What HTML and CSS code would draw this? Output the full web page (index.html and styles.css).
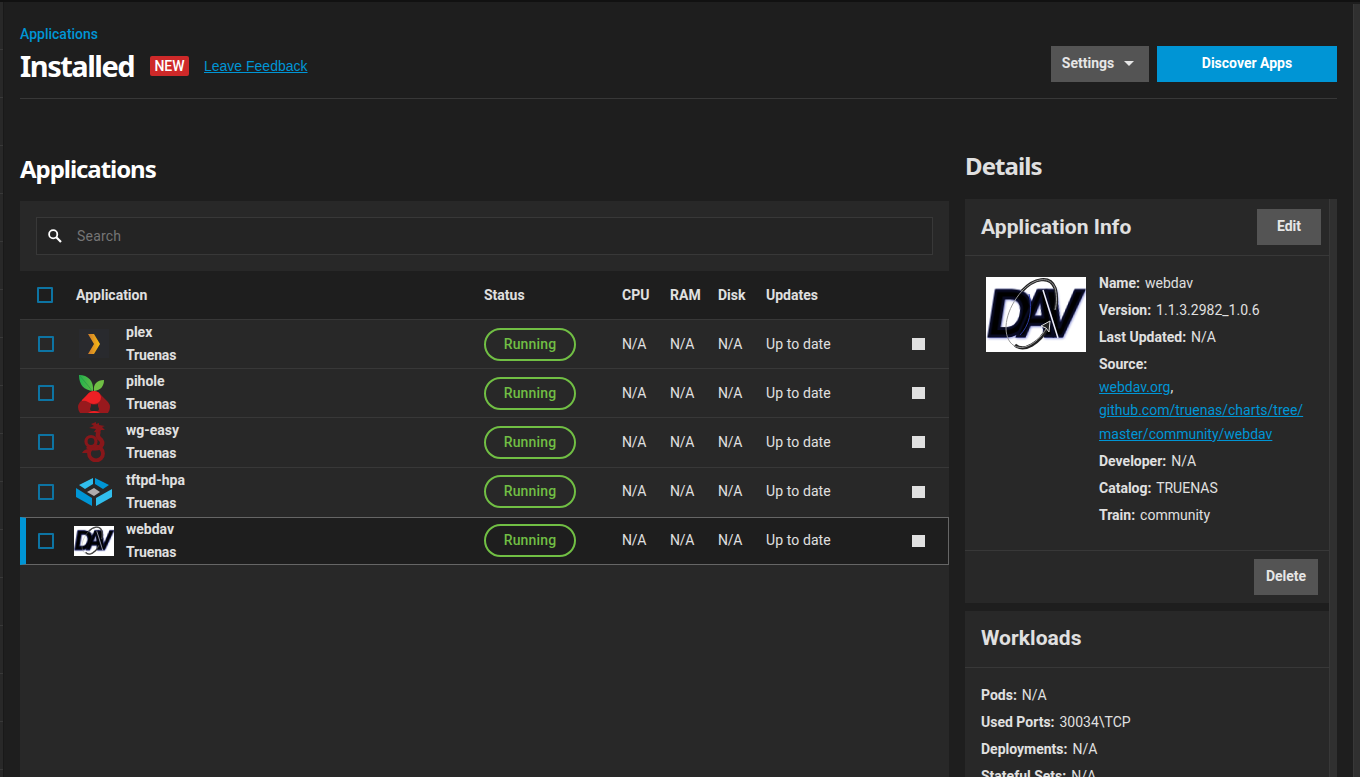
FILE: index.html
```html
<!DOCTYPE html>
<html lang="en">
<head>
<meta charset="utf-8">
<title>Installed Applications</title>
<link rel="stylesheet" href="styles.css">
</head>
<body>
<div class="topline"></div>
<div class="shell">
  <div class="rail"></div>
  <main class="main">
    <header class="page-header">
      <div>
        <a class="crumb">Applications</a>
        <div class="title-row"><h1>Installed</h1><span class="new">NEW</span><a class="feedback">Leave Feedback</a></div>
      </div>
      <div class="actions">
        <button class="btn settings"><span>Settings</span><svg width="10" height="5" viewBox="0 0 10 5"><path d="M0 0h10L5 5z" fill="#e6e6e6"/></svg></button>
        <button class="btn discover"><span>Discover Apps</span></button>
      </div>
    </header>
    <div class="columns">
      <section class="apps">
        <h2>Applications</h2>
        <div class="panel">
          <div class="search-wrap"><div class="search">
            <svg width="14" height="14" viewBox="0 0 14 14" fill="none" stroke="#fff"><circle cx="5.2" cy="5.2" r="4.1" stroke-width="1.8"/><path d="M8.3 8.3L13 13" stroke-width="2.2"/></svg>
            <span>Search</span></div></div>
          <div class="row head"><i class="check"></i><b class="app-head">Application</b><b class="w1">Status</b><b class="w2">CPU</b><b class="w3">RAM</b><b class="w4">Disk</b><b class="w5">Updates</b></div>

          <div class="row"><i class="check"></i>
            <div class="icon"><svg width="40" height="40" viewBox="0 0 40 40"><defs><linearGradient id="plexg"><stop offset="0" stop-color="#cc7a2c"/><stop offset="1" stop-color="#fabd12"/></linearGradient></defs><rect x="5" y="5" width="30" height="29" fill="#292a2e"/><path d="M14 10h6l6 10-6 10h-6l6-10z" fill="url(#plexg)"/></svg></div>
            <div class="name"><b>plex</b><b class="org">Truenas</b></div><div class="w1"><span class="pill">Running</span></div><span class="w2">N/A</span><span class="w3">N/A</span><span class="w4">N/A</span><span class="w5">Up to date</span><i class="stop"></i></div>

          <div class="row"><i class="check"></i>
            <div class="icon"><svg width="40" height="40" viewBox="0 0 40 40"><defs><linearGradient id="leaf"><stop offset="0" stop-color="#22b24c"/><stop offset="1" stop-color="#5fbb46"/></linearGradient></defs><path d="M5 2C14 2 20 8 19 18C10 17 5 12 5 2Z" fill="url(#leaf)"/><path d="M30 7C30 13 27 17 20 18C19 11 23 7 30 7Z" fill="#70bf44"/><path d="M6 3C10 8 14 12 18 18" stroke="#239046" stroke-width=".6" fill="none"/><path d="M20 18Q24 18 27 22L34 29Q38 34 34 40H6Q2 34 6 29L13 22Q16 18 20 18Z" fill="#98191d"/><path d="M8 27L13 22Q16 18 20 18Q26 18 27 24Q27 30 20 31Q17 31 14 29Q11 27 8 28Z" fill="#ed2024"/><path d="M17 31Q20.500 32 24 31L24 33L25 36Q25 38 23 38H18Q16 38 16 36L17 33Z" fill="#282828"/><path d="M14 40Q20 36 26 40Z" fill="#ed2024"/></svg></div>
            <div class="name"><b>pihole</b><b class="org">Truenas</b></div><div class="w1"><span class="pill">Running</span></div><span class="w2">N/A</span><span class="w3">N/A</span><span class="w4">N/A</span><span class="w5">Up to date</span><i class="stop"></i></div>

          <div class="row tall"><i class="check"></i>
            <div class="icon"><svg width="40" height="40" viewBox="0 0 40 40"><g fill="none" stroke="#88171a"><path d="M23 7Q25 9 24 12Q23 15 26 17Q30 20 27 24Q25 27 19 26" stroke-width="4.500"/><circle cx="17" cy="19.500" r="5" stroke-width="3.200"/><circle cx="22" cy="31.500" r="7" stroke-width="3.800"/><path d="M13 25Q17 29 24 25" stroke-width="3"/></g><path d="M17 2L22 0L22 2L25 1L25 3L31 4L28 5L31 8H27L25 11L20 10L22 7L15 6L20 4Z" fill="#88171a"/><path d="M8 31Q10 27 15 27L14 31Z" fill="#88171a"/></svg></div>
            <div class="name"><b>wg-easy</b><b class="org">Truenas</b></div><div class="w1"><span class="pill">Running</span></div><span class="w2">N/A</span><span class="w3">N/A</span><span class="w4">N/A</span><span class="w5">Up to date</span><i class="stop"></i></div>

          <div class="row tall"><i class="check"></i>
            <div class="icon"><svg width="40" height="40" viewBox="0 0 40 40"><path d="M19 6v6l-8 5-6-4z" fill="#31beec"/><path d="M21 6l14 7-6 4-8-5z" fill="#0095d5"/><path d="M2 16l16 10v8L2 25z" fill="#0095d5"/><path d="M38 17v8l-16 9v-8z" fill="#31beec"/><path d="M20 16l6 4-6 4-7-4z" fill="#aeadae"/></svg></div>
            <div class="name"><b>tftpd-hpa</b><b class="org">Truenas</b></div><div class="w1"><span class="pill">Running</span></div><span class="w2">N/A</span><span class="w3">N/A</span><span class="w4">N/A</span><span class="w5">Up to date</span><i class="stop"></i></div>

          <div class="row selected"><i class="check"></i>
            <div class="icon"><svg class="dav" width="40" height="30" viewBox="0 0 100 75">
              <rect width="100" height="75" fill="#fff"/>
              <g class="dav-text" transform="translate(0 59) skewX(-9)"><text x="-1" textLength="44" lengthAdjust="spacingAndGlyphs">D</text><text x="30" textLength="38" lengthAdjust="spacingAndGlyphs">A</text><text x="53" textLength="38" lengthAdjust="spacingAndGlyphs">V</text></g>
              <path d="M57 13L72 61" stroke="#eef" stroke-width="1.500"/>
              <path class="ring" d="M36 14C48 1 64-2 69 11C71 18 71 26 69 33M29 66C38 76 54 66 62 50"/>
              <path class="shine" d="M36 14C20 32 16 54 24 65C34 78 54 66 62 48M36 14C48 1 64-2 69 11C71 18 71 26 69 33"/>
            </svg></div>
            <div class="name"><b>webdav</b><b class="org">Truenas</b></div><div class="w1"><span class="pill">Running</span></div><span class="w2">N/A</span><span class="w3">N/A</span><span class="w4">N/A</span><span class="w5">Up to date</span><i class="stop"></i></div>
        </div>
      </section>
      <section class="details">
        <h2>Details</h2>
        <div class="scroll">
          <div class="cards">
            <div class="card">
              <div class="card-head"><h3>Application Info</h3><button class="btn edit"><span>Edit</span></button></div>
              <div class="info">
                <svg class="dav logo" width="100" height="75" viewBox="0 0 100 75">
                  <rect width="100" height="75" fill="#fff"/>
                  <g class="dav-text" transform="translate(0 59) skewX(-9)"><text x="-1" textLength="44" lengthAdjust="spacingAndGlyphs">D</text><text x="30" textLength="38" lengthAdjust="spacingAndGlyphs">A</text><text x="53" textLength="38" lengthAdjust="spacingAndGlyphs">V</text></g>
                  <path d="M57 13L72 61" stroke="#eef" stroke-width="1.500"/>
                  <path d="M43 17C47 34 43 49 34 58" fill="none" stroke="#2b3aa0"/>
                  <path class="ring" d="M36 14C48 1 64-2 69 11C71 18 71 26 69 33M29 68C38 76 54 66 62 50"/>
                  <path class="shine" d="M36 14C20 32 16 54 24 65C34 78 54 66 62 48M36 14C48 1 64-2 69 11C71 18 71 26 69 33"/>
                  <path d="M55 49L64 44L63 55L60 51Z" fill="#222" stroke="#ddd"/>
                </svg>
                <div class="facts">
                  <p><b>Name:</b> webdav</p><p><b>Version:</b> 1.1.3.2982_1.0.6</p><p><b>Last Updated:</b> N/A</p>
                  <p><b>Source:</b></p>
                  <div class="links"><a>webdav.org</a>,<br><a>github.com/truenas/charts/tree/<br>master/community/webdav</a></div>
                  <p><b>Developer:</b> N/A</p><p><b>Catalog:</b> TRUENAS</p><p><b>Train:</b> community</p>
                </div>
              </div>
              <div class="card-foot"><button class="btn delete"><span>Delete</span></button></div>
            </div>
            <div class="card">
              <div class="card-head work-head"><h3>Workloads</h3></div>
              <div class="facts work"><p><b>Pods:</b> N/A</p><p><b>Used Ports:</b> 30034\TCP</p><p><b>Deployments:</b> N/A</p><p><b>Stateful Sets:</b> N/A</p></div>
            </div>
          </div>
          <div class="thumb"></div>
        </div>
      </section>
    </div>
  </main>
  <div class="page-scroll"></div>
</div>
</body>
</html>
```
FILE: styles.css
```css
* { box-sizing: border-box; }
body { margin: 0; height: 777px; overflow: hidden; background: #1e1e1e; color: #e0e0e0; font: 14px/23px Roboto, sans-serif; display: flex; flex-direction: column; }
.dav { display: block; }
.dav-text { font: bold 66px/1 "Liberation Sans", sans-serif; fill: #000; stroke: #080a22; stroke-width: 3px; filter: drop-shadow(0 0 .7px #3a44b8) drop-shadow(1px 1px 1px #9aa0dd); }
.ring { fill: none; stroke: #222; stroke-width: 3.200px; }
.shine { fill: none; stroke: #999; stroke-width: 1px; }
h1, h2, h3, p { margin: 0; }
a { color: #0095d5; text-decoration: underline; }
.topline { height: 2px; background: #111; flex: none; }
.shell { flex: 1; min-height: 0; display: flex; }
.rail { width: 4px; border-right: 1px solid #191919; background: repeating-linear-gradient(#282828 0 47px, #383838 47px 48px); }
.main { flex: 1; min-width: 0; padding: 0 16px; display: flex; flex-direction: column; }
.page-scroll { width: 7px; margin-top: 2px; background: #303030; border-left: 1px solid #383838; }
.page-header { height: 97px; flex: none; border-bottom: 1px solid #383838; display: flex; justify-content: space-between; padding-top: 21px; }
.crumb { display: block; text-decoration: none; font-weight: 500; line-height: 23px; }
.title-row { display: flex; align-items: center; height: 40px; }
h1 { font: bold 29px/40px "Noto Sans", sans-serif; color: #fff; width: 130px; letter-spacing: -1.5px; }
.new { background: #ce2929; color: #fff; border-radius: 2px; width: 39px; height: 20px; font-weight: 500; line-height: 20px; text-align: center; margin-right: 15px; }
.feedback { font-family: "Liberation Sans", sans-serif; font-size: 14px; }
.actions { display: flex; gap: 8px; padding-top: 23px; }
.btn { border: 0; height: 36px; background: #545454; color: #e6e6e6; font: bold 14px/35px Roboto, sans-serif; display: flex; align-items: center; justify-content: center; padding: 0 0 1px; }
.settings { width: 98px; gap: 10px; padding-right: 4px; }
.discover { width: 180px; background: #0095d5; color: #fff; }
.columns { flex: 1; min-height: 0; display: flex; gap: 16px; }
.apps { width: 929px; display: flex; flex-direction: column; }
h2 { font: bold 24px/36px "Noto Sans", sans-serif; letter-spacing: -1.050px; }
.apps h2 { color: #fff; margin: 52px 0 14px; }
.panel { flex: 1; background: #282828; }
.search-wrap { height: 70px; padding: 16px; }
.search { height: 38px; border: 1px solid #383838; background: #242424; display: flex; align-items: center; padding-left: 11px; gap: 15px; color: #757575; letter-spacing: .2px; }
.row { height: 49px; border-top: 1px solid #383838; display: flex; align-items: center; padding-left: 18px; padding-right: 23px; }
.row.tall { height: 50px; padding-bottom: 1px; }
.row.tall + .row.tall { padding-bottom: 2px; }
.head { background: #1e1e1e; height: 48px; border-top: 0; padding-left: 17px; }
.check { width: 16px; height: 16px; border: 2px solid #0d74a3; border-radius: 1px; flex: none; }
.app-head { margin-left: 23px; width: 408px; }
.icon { width: 40px; height: 40px; margin-left: 20px; display: flex; align-items: center; }
.name { margin-left: 12px; width: 358px; display: flex; flex-direction: column; }
.org { letter-spacing: -.150px; }
.w1 { width: 138px; }
.w2, .w3, .w4 { width: 48px; }
span.w2, span.w3, span.w4 { letter-spacing: -.2px; }
.w5 { width: 146px; }
span.w5 { letter-spacing: .1px; }
.pill { display: block; width: 92px; height: 33px; border: 2px solid #71bf44; border-radius: 17px; color: #71bf44; font-weight: 500; line-height: 29px; text-align: center; letter-spacing: .15px; }
.stop { width: 13px; height: 12px; background: #e0e0e0; }
.selected { height: 48px; background: #1e1e1e; border: 1px solid #666; border-left: 6px solid #0095d5; padding-left: 12px; padding-right: 22px; }
.selected .pill { margin-top: -1px; }
.selected > span { margin-top: -1px; }
.details { width: 372px; display: flex; flex-direction: column; }
.details h2 { margin: 49px 0 15px; letter-spacing: -.9px; }
.scroll { flex: 1; min-height: 0; display: flex; overflow: hidden; }
.cards { width: 364px; display: flex; flex-direction: column; gap: 8px; }
.card { background: #282828; flex: none; }
.card-head { height: 57px; border-bottom: 1px solid #383838; display: flex; justify-content: space-between; align-items: center; padding: 0 8px 1px 16px; }
.work-head { padding-bottom: 3px; }
h3 { font: bold 21px/24px Roboto, sans-serif; letter-spacing: .05px; }
.edit { margin-top: 1px; }
.edit, .delete { width: 64px; }
.info { height: 294px; display: flex; padding: 14px 16px 0 21px; gap: 13px; }
.logo { margin-top: 7px; flex: none; }
.facts p { height: 27px; line-height: 27px; }
.facts b { margin-right: 1.500px; }
.links { height: 70px; line-height: 23.400px; margin-top: -2px; margin-bottom: 2px; white-space: nowrap; }
.card-foot { height: 53px; border-top: 1px solid #383838; display: flex; justify-content: flex-end; padding: 8px 11px 0; }
.work { padding: 14px 16px; height: 160px; }
.thumb { width: 8px; background: #303030; border-left: 1px solid #383838; }
```
